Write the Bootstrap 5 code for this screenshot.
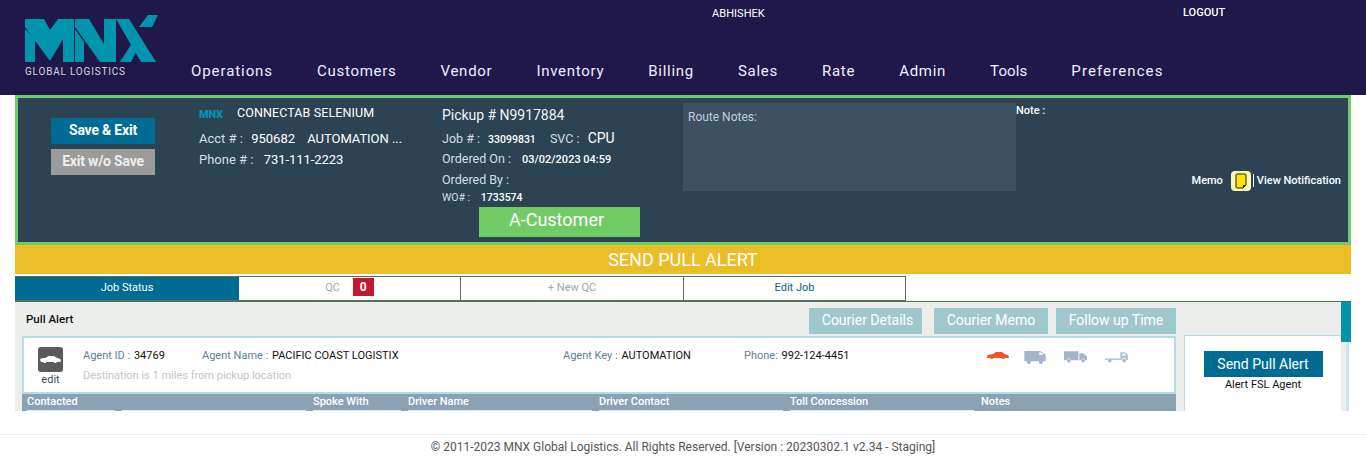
<!DOCTYPE html>
<html lang="en">
<head>
<meta charset="utf-8">
<title>Pull Alert</title>
<link href="https://cdn.jsdelivr.net/npm/bootstrap@5.3.0/dist/css/bootstrap.min.css" rel="stylesheet">
<style>
html,body{height:462px;overflow:hidden;background:#fff;font-family:Roboto,"Liberation Sans",sans-serif;}
a{text-decoration:none;}
.top-bar{height:95px;background:#20174a;color:#fff;}
.logo-box{width:191px;flex:none;padding:15px 0 0 25px;}
.logo-box svg{display:block;}
.logo-sub{font-size:10px;line-height:12px;letter-spacing:.8px;color:#d5d5de;margin-top:4px;white-space:nowrap;}
.top-main{flex:1;min-width:0;}
.top-links{height:60px;font-size:11px;}
.user-name{margin-left:521px;width:60px;padding-top:7px;line-height:13px;letter-spacing:.05px;}
.logout{margin-left:411px;padding-top:6px;line-height:13px;font-weight:500;}
.nav-items{gap:44px;font-size:15px;line-height:20px;letter-spacing:.72px;padding-top:6px;margin-top:-5px;}
.nav-items a{color:#eef;}
.nav-items a.nav-wide{letter-spacing:.92px;}
.nav-items a.nav-wider{letter-spacing:1.1px;}
.nav-items a.nav-tight{letter-spacing:.1px;}
.page-body{padding:0 15px;}
.job-head{height:150px;width:1336px;background:#2c4354;border:3px solid #6fcb67;color:#d6dde6;font-size:13px;}
.save-col{width:181px;flex:none;padding:20px 0 0 33px;}
.act{display:block;width:104px;height:26px;line-height:25px;text-align:center;color:#fff;font-size:14px;font-weight:700;letter-spacing:-.2px;}
.act-blue{background:#006c94;}
.act-gray{background:#9b9b9b;margin-top:5px;color:#eee;}
.acct-col{width:243px;flex:none;padding-top:7px;}
.acct-name{color:#fff;font-size:12.5px;line-height:16px;letter-spacing:.1px;}
.mini-logo{color:#0095ad;font-size:11px;font-weight:900;width:38px;line-height:16px;letter-spacing:-.2px;padding-top:2px;}
.info-row{line-height:18px;margin-top:7px;white-space:nowrap;}
.info-row + .info-row{margin-top:3px;}
.info-row b{font-weight:400;color:#fff;margin-left:5px;}
.info-row b.acct-tag{margin-left:9px;letter-spacing:-.05px;}
.info-row b.phone-val{margin-left:7px;letter-spacing:-.05px;}
.pick-col{width:241px;flex:none;padding-top:7px;}
.pick-no{font-size:14px;line-height:20px;color:#f0f4f8;letter-spacing:-.03px;margin-bottom:4px;}
.pick-row{height:18px;line-height:18px;margin-top:3px;white-space:nowrap;font-size:12.5px;}
.pick-row b{font-size:10.5px;font-weight:500;color:#fff;margin-left:5px;}
.pick-row b.svc{font-size:14px;font-weight:400;}
.pick-row b.stamp{font-size:11px;margin-left:8px;}
.svc-lbl{margin-left:11px;}
.wo-row{font-size:10.5px;line-height:13px;margin-top:2px;}
.wo-row b{font-weight:500;color:#fff;margin-left:8px;}
.cust-tag{display:block;width:161px;height:30px;line-height:26px;margin:3px 0 0 37px;padding-right:6px;background:#70cb65;color:#fff;text-align:center;font-size:18px;}
.route-box{width:333px;height:88px;flex:none;margin-top:5px;background:#3c5162;padding:6px 5px;font-size:12px;line-height:16px;color:#c3ccd6;}
.note-col{flex:1;min-width:0;padding:6px 7px 0 0;color:#fff;font-size:11px;font-weight:500;line-height:14px;}
.memo-row{margin-top:52px;height:21px;}
.memo-btn{width:20px;height:20px;background:#fdf8b6;border-radius:4px;margin:0 2px 0 8px;}
.memo-sep{width:1px;height:13px;background:#fff;margin-right:3px;}
.alert-band{height:29px;width:1336px;background:#ebbd26;color:#fff;text-align:center;font-size:18px;line-height:29px;}
.tab-strip{height:27px;margin-top:2px;width:1336px;font-size:11px;}
.tab-cell{width:222px;height:25px;line-height:22px;text-align:center;background:#fff;border:1px solid #666;border-left-width:0;color:#9aa;}
.tab-first{width:224px;background:#006c94;color:#fff;border:0;border-top:1px solid #666;border-bottom:1px solid #666;}
.tab-mid{width:223px;}
.tab-edit{color:#0b5f7e;}
.qc-count{display:inline-block;width:21px;height:18px;line-height:18px;background:#c11a2e;color:#fff;font-size:12px;font-weight:700;margin-left:10px;}
.pull-wrap{height:110px;width:1336px;margin-top:-2px;overflow:hidden;position:relative;border-top:1px solid #3f7c45;}
.pull-panel{width:1334px;background:#eceeec;height:110px;border-right:3px solid #c5e5f0;}
.pull-main{width:1169px;flex:none;padding-left:7px;}
.pull-top{height:34px;width:1154px;}
.pull-title{font-size:11.5px;font-weight:500;color:#111;line-height:16px;padding:9px 0 0 4px;}
.soft-btns{padding:6px 0 0;}
.soft-btn{height:26px;line-height:25px;padding:0;text-align:center;background:#9fc8cc;color:#fff;font-size:14px;}
.soft-a{width:113px;margin-right:12px;padding-left:4px;}
.soft-b{width:114px;margin-right:8px;}
.soft-c{width:120px;}
.agent-card{width:1154px;height:58px;background:#fff;border:2px solid #b5dbe3;font-size:11px;color:#5f7f95;}
.edit-col{width:59px;flex:none;padding:9px 0 0 14px;text-align:center;line-height:14px;}
.edit-ico{width:25px;height:25px;background:#5b5b5b;border-radius:3px;display:flex;align-items:center;justify-content:center;}
.edit-lbl{display:block;width:25px;margin-top:1px;color:#355;}
.agent-info{flex:1;min-width:0;padding-top:11px;line-height:14px;}
.agent-line b{font-weight:400;color:#111;margin-left:1px;}
.dest-line{color:#c1c5c8;margin-top:5px;}
.field-agentid{width:119px;}
.field-name{width:361px;}
.field-key{width:181px;}
.field-phone{width:243px;}
.veh-icons{padding-top:2px;}
.veh-van{margin:0 17px 0 15px;}
.veh-truck{margin-right:18px;}
.col-head{width:1154px;height:17px;background:#8da1b5;color:#fff;font-size:11px;font-weight:500;}
.col-cell{padding-left:5px;flex:none;line-height:16px;}
.col-w1{width:286px;}
.col-w2{width:95px;}
.col-w3{width:191px;}
.col-bars{gap:7px;height:2px;}
.col-field{height:2px;background:#d9edf3;flex:none;}
.bar-s{width:88px;}
.bar-l{width:184px;}
.side-box{width:157px;flex:none;margin-top:33px;background:#fff;border:1px solid #b5dbe3;border-right:0;text-align:center;padding-top:15px;height:90px;font-size:11px;color:#111;line-height:14px;}
.side-btn{display:block;width:119px;height:26px;line-height:26px;margin:0 auto 1px;background:#006c94;color:#fff;font-size:14px;}
.scroll-grip{position:absolute;left:1326px;top:0;width:12px;height:40px;background:#0095ad;}
.foot-line{position:absolute;left:0;right:0;top:434px;height:28px;border-top:1px solid #edf0f4;background:#fff;text-align:center;font-size:12px;line-height:25px;color:#555;}
</style>
</head>
<body>
<header class="top-bar d-flex">
  <div class="logo-box">
    <svg width="134" height="47" viewBox="25 15 134 47" aria-label="MNX logo">
      <g fill="#0095ad">
        <polygon points="25,29 35,39 35,62 25,62"/>
        <polygon points="25,19 44,19 50,30 58,19 74,19 74,62 63,62 63,39 50,61 25,27"/>
        <polygon points="75,29 84,42 84,62 75,62"/>
        <polygon points="75,19 89,19 104,44 104,19 116,19 116,62 100,62 75,27"/>
        <polygon points="116,19 129,19 156,62 141,62"/>
        <polygon points="120,62 132,43 137,50 131,62"/>
        <polygon points="139,27 148,15 158,15 152,27"/>
      </g>
    </svg>
    <div class="logo-sub">GLOBAL LOGISTICS</div>
  </div>
  <div class="top-main">
    <div class="top-links d-flex">
      <div class="user-name">ABHISHEK</div>
      <div class="logout">LOGOUT</div>
    </div>
    <nav class="nav-items d-flex">
      <a class="nav-wide" href="#">Operations</a><a href="#">Customers</a><a href="#">Vendor</a><a href="#">Inventory</a><a href="#">Billing</a><a href="#">Sales</a><a href="#">Rate</a><a href="#">Admin</a><a class="nav-tight" href="#">Tools</a><a class="nav-wider" href="#">Preferences</a>
    </nav>
  </div>
</header>
<main class="page-body">
  <section class="job-head d-flex">
    <div class="save-col">
      <a class="act act-blue" href="#">Save &amp; Exit</a>
      <a class="act act-gray" href="#">Exit w/o Save</a>
    </div>
    <div class="acct-col">
      <div class="d-flex"><span class="mini-logo">MNX</span><span class="acct-name">CONNECTAB SELENIUM</span></div>
      <div class="info-row">Acct # : <b>950682</b> <b class="acct-tag">AUTOMATION ...</b></div>
      <div class="info-row">Phone # : <b class="phone-val">731-111-2223</b></div>
    </div>
    <div class="pick-col">
      <div class="pick-no">Pickup # N9917884</div>
      <div class="pick-row">Job # : <b>33099831</b> <span class="svc-lbl">SVC :</span> <b class="svc">CPU</b></div>
      <div class="pick-row">Ordered On : <b class="stamp">03/02/2023 04:59</b></div>
      <div class="pick-row">Ordered By :</div>
      <div class="wo-row">WO# : <b>1733574</b></div>
      <a class="cust-tag" href="#">A-Customer</a>
    </div>
    <div class="route-box">Route Notes:</div>
    <div class="note-col">
      <div>Note :</div>
      <div class="memo-row d-flex align-items-center justify-content-end">
        <span>Memo</span>
        <span class="memo-btn d-flex align-items-center justify-content-center">
          <svg width="12" height="16" viewBox="0 0 12 16"><path d="M1 2Q1 1 2 1H10Q11 1 11 2V12L8 15H2Q1 15 1 14Z" fill="#ffe600" stroke="#222" stroke-width="1"/><path d="M8 15V12H11Z" fill="#222"/></svg>
        </span>
        <span class="memo-sep"></span>
        <span>View Notification</span>
      </div>
    </div>
  </section>
  <div class="alert-band">SEND PULL ALERT</div>
  <div class="tab-strip d-flex">
    <div class="tab-cell tab-first">Job Status</div>
    <div class="tab-cell">QC <span class="qc-count">0</span></div>
    <div class="tab-cell tab-mid">+ New QC</div>
    <div class="tab-cell tab-edit">Edit Job</div>
  </div>
  <section class="pull-wrap">
    <div class="pull-panel d-flex">
      <div class="pull-main">
        <div class="pull-top d-flex justify-content-between">
          <div class="pull-title">Pull Alert</div>
          <div class="soft-btns d-flex">
            <a class="soft-btn soft-a" href="#">Courier Details</a>
            <a class="soft-btn soft-b" href="#">Courier Memo</a>
            <a class="soft-btn soft-c" href="#">Follow up Time</a>
          </div>
        </div>
        <div class="agent-card d-flex">
          <div class="edit-col">
            <span class="edit-ico">
              <svg width="21" height="9" viewBox="0 0 21 9"><path d="M0 5Q0 3.500 2 3.300L6 2.800 8.500 1H14L17 3 20 3.800Q21 4.500 21 6L20 7H17A2 2 0 0 1 13.500 7H6.500A2 2 0 0 1 3 7H1Z" fill="#fff"/></svg>
            </span>
            <span class="edit-lbl">edit</span>
          </div>
          <div class="agent-info">
            <div class="agent-line d-flex">
              <span class="field-agentid">Agent ID : <b>34769</b></span>
              <span class="field-name">Agent Name : <b>PACIFIC COAST LOGISTIX</b></span>
              <span class="field-key">Agent Key : <b>AUTOMATION</b></span>
              <span class="field-phone">Phone: <b>992-124-4451</b></span>
              <span class="veh-icons d-flex">
                <svg width="22" height="10" viewBox="0 0 22 10"><path d="M0 5.500Q0 4 2 3.700L6 3 9 1H15L18 3.300 21 4Q22 5 22 6.500L21 7H18A2 2 0 0 1 14.500 7H6.500A2 2 0 0 1 3 7H.5Z" fill="#f4502a"/></svg>
                <svg class="veh-van" width="23" height="13" viewBox="0 0 24 14"><path d="M0 0H17L23 4V11H20A2.300 2.300 0 0 1 15.500 11H7A2.300 2.300 0 0 1 2.500 11H0Z" fill="#a3b5c6"/><path d="M16 1.500H18L21 4H16Z" fill="#fff"/><circle cx="4.800" cy="12" r="2" fill="#a3b5c6"/><circle cx="17.800" cy="12" r="2" fill="#a3b5c6"/></svg>
                <svg class="veh-truck" width="23" height="12" viewBox="0 0 24 12"><path d="M0 0H15V9.500H7A2 2 0 0 0 3 9.500H0Z" fill="#a3b5c6"/><path d="M16 2H20L24 5.500V9.500H22A2 2 0 0 0 18 9.500H16Z" fill="#a3b5c6"/><circle cx="5" cy="10" r="1.800" fill="#a3b5c6"/><circle cx="20" cy="10" r="1.800" fill="#a3b5c6"/></svg>
                <svg width="23" height="12" viewBox="0 0 24 12"><path d="M0 7.500H16V1H21L24 4V9H22A2 2 0 0 0 18 9H6.500A2 2 0 0 0 3 9H0Z" fill="#b5c4d2"/><path d="M18 2.500H20.500L22 4.500H18Z" fill="#fff"/><circle cx="5" cy="10" r="1.800" fill="#a3b5c6"/><circle cx="20" cy="10" r="1.800" fill="#a3b5c6"/></svg>
              </span>
            </div>
            <div class="dest-line">Destination is 1 miles from pickup location</div>
          </div>
        </div>
        <div class="col-head d-flex">
          <div class="col-cell col-w1">Contacted<div class="col-bars d-flex"><span class="col-field bar-s"></span><span class="col-field bar-l"></span></div></div>
          <div class="col-cell col-w2">Spoke With<div class="col-bars d-flex"><span class="col-field bar-s"></span></div></div>
          <div class="col-cell col-w3">Driver Name<div class="col-bars d-flex"><span class="col-field bar-l"></span></div></div>
          <div class="col-cell col-w3">Driver Contact<div class="col-bars d-flex"><span class="col-field bar-l"></span></div></div>
          <div class="col-cell col-w3">Toll Concession<div class="col-bars d-flex"><span class="col-field bar-l"></span></div></div>
          <div class="col-cell col-w3">Notes</div>
        </div>
      </div>
      <aside class="side-box">
        <a class="side-btn" href="#">Send Pull Alert</a>
        Alert FSL Agent
      </aside>
    </div>
    <div class="scroll-grip"></div>
  </section>
</main>
<footer class="foot-line">© 2011-2023 MNX Global Logistics. All Rights Reserved. [Version : 20230302.1 v2.34 - Staging]</footer>
</body>
</html>
